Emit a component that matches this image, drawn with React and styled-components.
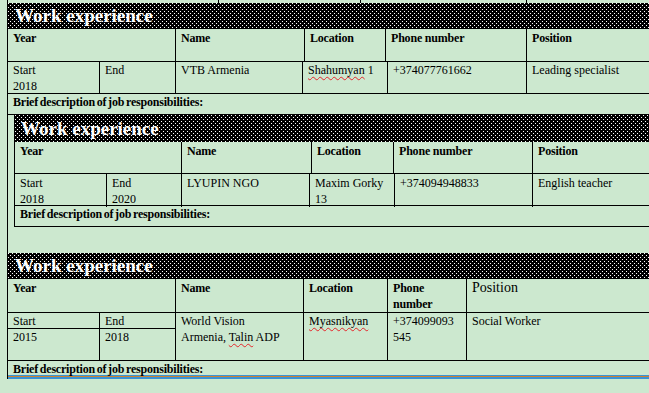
import React from 'react';
import styled, { createGlobalStyle } from 'styled-components';

const Global = createGlobalStyle`
  html, body { margin: 0; padding: 0; background: #cce8cf; }
  body { width: 649px; height: 393px; overflow: hidden; }
`;

const Page = styled.div`
  width: 649px;
  height: 393px;
  overflow: hidden;
  box-sizing: border-box;
  padding-left: 7px;
  background: #cce8cf;
  font-family: "Liberation Serif", "Times New Roman", serif;
  color: #000;
`;

const Frame = styled.div`
  width: 720px;
  border-left: 1px solid #000;
`;

const Nested = styled.div`
  margin-left: 6px;
  border-left: 1px solid #000;
`;

const Spacer = styled.div`
  height: ${(p) => p.$h}px;
`;

const Strip = styled.div`
  display: grid;
  grid-template-columns: ${(p) => p.$cols};
  height: ${(p) => p.$h}px;
`;

const StripCell = styled.div`
  border-right: ${(p) => (p.$open ? '0' : '1px solid #000')};
`;

const Title = styled.div`
  height: ${(p) => p.$h}px;
  line-height: ${(p) => p.$h}px;
  padding-left: ${(p) => p.$indent}px;
  background-color: #000;
  background-image:
    conic-gradient(at 1px 1px, transparent 75%, #fff 0),
    conic-gradient(at 1px 1px, transparent 75%, #fff 0);
  background-size: 4px 4px;
  background-position: 0 0, 2px 2px;
  color: #fff;
  font-weight: 700;
  font-size: 19px;
  white-space: nowrap;
`;

const Row = styled.div`
  display: grid;
  grid-template-columns: ${(p) => p.$cols};
  grid-template-rows: ${(p) => p.$rows || 'auto'};
  height: ${(p) => p.$h}px;
  box-sizing: border-box;
  border-bottom: ${(p) => (p.$flat ? '0' : '1px solid #000')};
`;

const Cell = styled.div`
  box-sizing: border-box;
  min-width: 0;
  border-right: ${(p) => (p.$open ? '0' : '1px solid #000')};
  border-bottom: ${(p) => (p.$under ? '1px solid #000' : '0')};
  padding: ${(p) => (p.$pt ?? 1)}px 5px 0 5px;
  font-size: ${(p) => p.$size || 12}px;
  line-height: 16px;
  font-weight: ${(p) => (p.$bold ? 700 : 400)};
  letter-spacing: ${(p) => (p.$bold ? '-0.2px' : '0')};
  grid-row: ${(p) => p.$row || 'auto'};
  grid-column: ${(p) => p.$col || 'auto'};
  white-space: ${(p) => (p.$nowrap ? 'nowrap' : 'normal')};
`;

const Brief = styled.div`
  padding: 0 5px;
  font-size: 12px;
  line-height: 16px;
  font-weight: 700;
  letter-spacing: -0.2px;
  word-spacing: -1px;
  white-space: nowrap;
`;

const Misspelt = styled.span`
  text-decoration: underline wavy #e4262b;
  text-decoration-thickness: 1px;
  text-underline-offset: 2px;
  text-decoration-skip-ink: none;
`;

const Rule = styled.div`
  height: 1px;
  background: ${(p) => p.$color};
`;

const BRIEF = 'Brief description of job responsibilities:';

export default function App() {
  return (
    <>
      <Global />
      <Page>
        <Frame>
          <Strip $cols="211px 142px 166px 1fr" $h={3}>
            <StripCell />
            <StripCell />
            <StripCell />
            <StripCell $open />
          </Strip>

          <Title $h={26} $indent={7}>Work experience</Title>
          <Row $cols="168px 129px 81px 141px 1fr" $h={33}>
            <Cell $bold>Year</Cell>
            <Cell $bold>Name</Cell>
            <Cell $bold>Location</Cell>
            <Cell $bold>Phone number</Cell>
            <Cell $bold $open>Position</Cell>
          </Row>
          <Row $cols="92px 76px 127px 85px 139px 1fr" $h={32}>
            <Cell $pt={0}>Start<br />2018</Cell>
            <Cell $pt={0}>End</Cell>
            <Cell $pt={0}>VTB Armenia</Cell>
            <Cell $pt={0} $nowrap><Misspelt>Shahumyan</Misspelt> 1</Cell>
            <Cell $pt={0}>+374077761662</Cell>
            <Cell $pt={0} $open>Leading specialist</Cell>
          </Row>
          <Row $cols="1fr" $h={21}>
            <Brief>{BRIEF}</Brief>
          </Row>

          <Nested>
            <Title $h={27} $indent={6}>Work experience</Title>
            <Row $cols="167px 130px 82px 139px 1fr" $h={32}>
              <Cell $bold>Year</Cell>
              <Cell $bold>Name</Cell>
              <Cell $bold>Location</Cell>
              <Cell $bold>Phone number</Cell>
              <Cell $bold $open>Position</Cell>
            </Row>
            <Row $cols="92px 75px 128px 85px 138px 1fr" $h={32}>
              <Cell>Start<br />2018</Cell>
              <Cell>End<br />2020</Cell>
              <Cell>LYUPIN NGO</Cell>
              <Cell>Maxim Gorky<br />13</Cell>
              <Cell>+374094948833</Cell>
              <Cell $open>English teacher</Cell>
            </Row>
            <Row $cols="1fr" $h={21}>
              <Brief>{BRIEF}</Brief>
            </Row>
          </Nested>

          <Spacer $h={26} />

          <Title $h={26} $indent={7}>Work experience</Title>
          <Row $cols="168px 128px 84px 79px 1fr" $h={34}>
            <Cell $bold>Year</Cell>
            <Cell $bold>Name</Cell>
            <Cell $bold>Location</Cell>
            <Cell $bold>Phone number</Cell>
            <Cell $size={14} $open>Position</Cell>
          </Row>
          <Row $cols="92px 76px 128px 84px 79px 1fr" $rows="16px 1fr" $h={48}>
            <Cell $pt={0} $under $row="1" $col="1">Start</Cell>
            <Cell $pt={0} $under $row="1" $col="2">End</Cell>
            <Cell $pt={0} $row="1 / span 2" $col="3">World Vision<br />Armenia, <Misspelt>Talin</Misspelt> ADP</Cell>
            <Cell $pt={0} $row="1 / span 2" $col="4"><Misspelt>Myasnikyan</Misspelt></Cell>
            <Cell $pt={0} $row="1 / span 2" $col="5">+374099093<br />545</Cell>
            <Cell $pt={0} $row="1 / span 2" $col="6" $open>Social Worker</Cell>
            <Cell $pt={0} $row="2" $col="1">2015</Cell>
            <Cell $pt={0} $row="2" $col="2">2018</Cell>
          </Row>
          <Row $cols="1fr" $h={14} $flat>
            <Brief>{BRIEF}</Brief>
          </Row>
          <Rule $color="#3a93d4" />
          <Rule $color="#d0802e" />
          <Rule $color="#3a93d4" />
          <Rule $color="#3a93d4" />
        </Frame>
      </Page>
    </>
  );
}
